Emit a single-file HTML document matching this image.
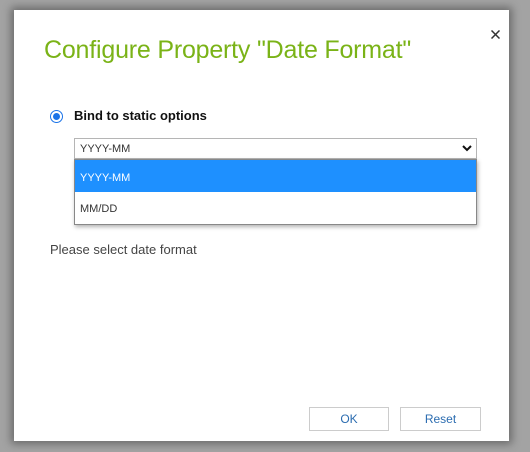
<!DOCTYPE html>
<html><head><style>
html,body{margin:0;padding:0;}
body{width:530px;height:452px;background:#a3a3a3;position:relative;overflow:hidden;font-family:"Liberation Sans",sans-serif;}
.dlg{position:absolute;left:14px;top:10px;width:495px;height:431px;background:#fff;box-shadow:0 0 8px 3px rgba(0,0,0,0.35);}
.title{position:absolute;left:44px;top:36px;font-size:25px;color:#7ab317;letter-spacing:-0.2px;}
.radio{position:absolute;left:50px;top:110px;width:11px;height:11px;border:1px solid #1a73e8;border-radius:50%;background:#fff;}
.radio:after{content:"";position:absolute;left:2px;top:2px;width:7px;height:7px;border-radius:50%;background:#1a73e8;}
.lbl{position:absolute;left:74px;top:108px;font-size:13px;font-weight:bold;color:#111;}
.sel{position:absolute;left:74px;top:138px;width:401px;height:19px;border:1px solid #b5b5b5;background:#fff;font-size:11px;color:#333;}
.sel span{position:absolute;left:5px;top:4px;}
.list{position:absolute;left:74px;top:159px;width:401px;height:64px;border:1px solid #888;background:#fff;box-shadow:1px 2px 4px rgba(0,0,0,0.3);font-size:11px;}
.hl{height:32px;background:#1e90ff;color:#fff;line-height:37px;padding-left:5px;}
.it{height:32px;line-height:34px;padding-left:5px;color:#333;}
.hint{position:absolute;left:50px;top:242px;font-size:13px;color:#444;}
.btn{position:absolute;top:407px;height:22px;border:1px solid #ccc;background:#fff;color:#2b6cb0;font-size:12px;text-align:center;line-height:22px;}
</style></head><body>
<div class="dlg"></div>
<div class="title">Configure Property "Date Format"</div>
<svg style="position:absolute;left:491px;top:30px" width="9" height="9" viewBox="0 0 9 9"><path d="M0.5 0.5 L8.5 8.5 M8.5 0.5 L0.5 8.5" stroke="#333" stroke-width="1.5"/></svg>
<div class="radio"></div>
<div class="lbl">Bind to static options</div>
<div class="sel"><span>YYYY-MM</span>
<svg style="position:absolute;right:4px;top:5px" width="10" height="8" viewBox="0 0 10 8"><path d="M1 2 L5 6 L9 2" stroke="#111" stroke-width="2" fill="none"/></svg></div>
<div class="list"><div class="hl">YYYY-MM</div><div class="it">MM/DD</div></div>
<div class="hint">Please select date format</div>
<div class="btn" style="left:309px;width:78px">OK</div>
<div class="btn" style="left:400px;width:79px">Reset</div>
</body></html>
